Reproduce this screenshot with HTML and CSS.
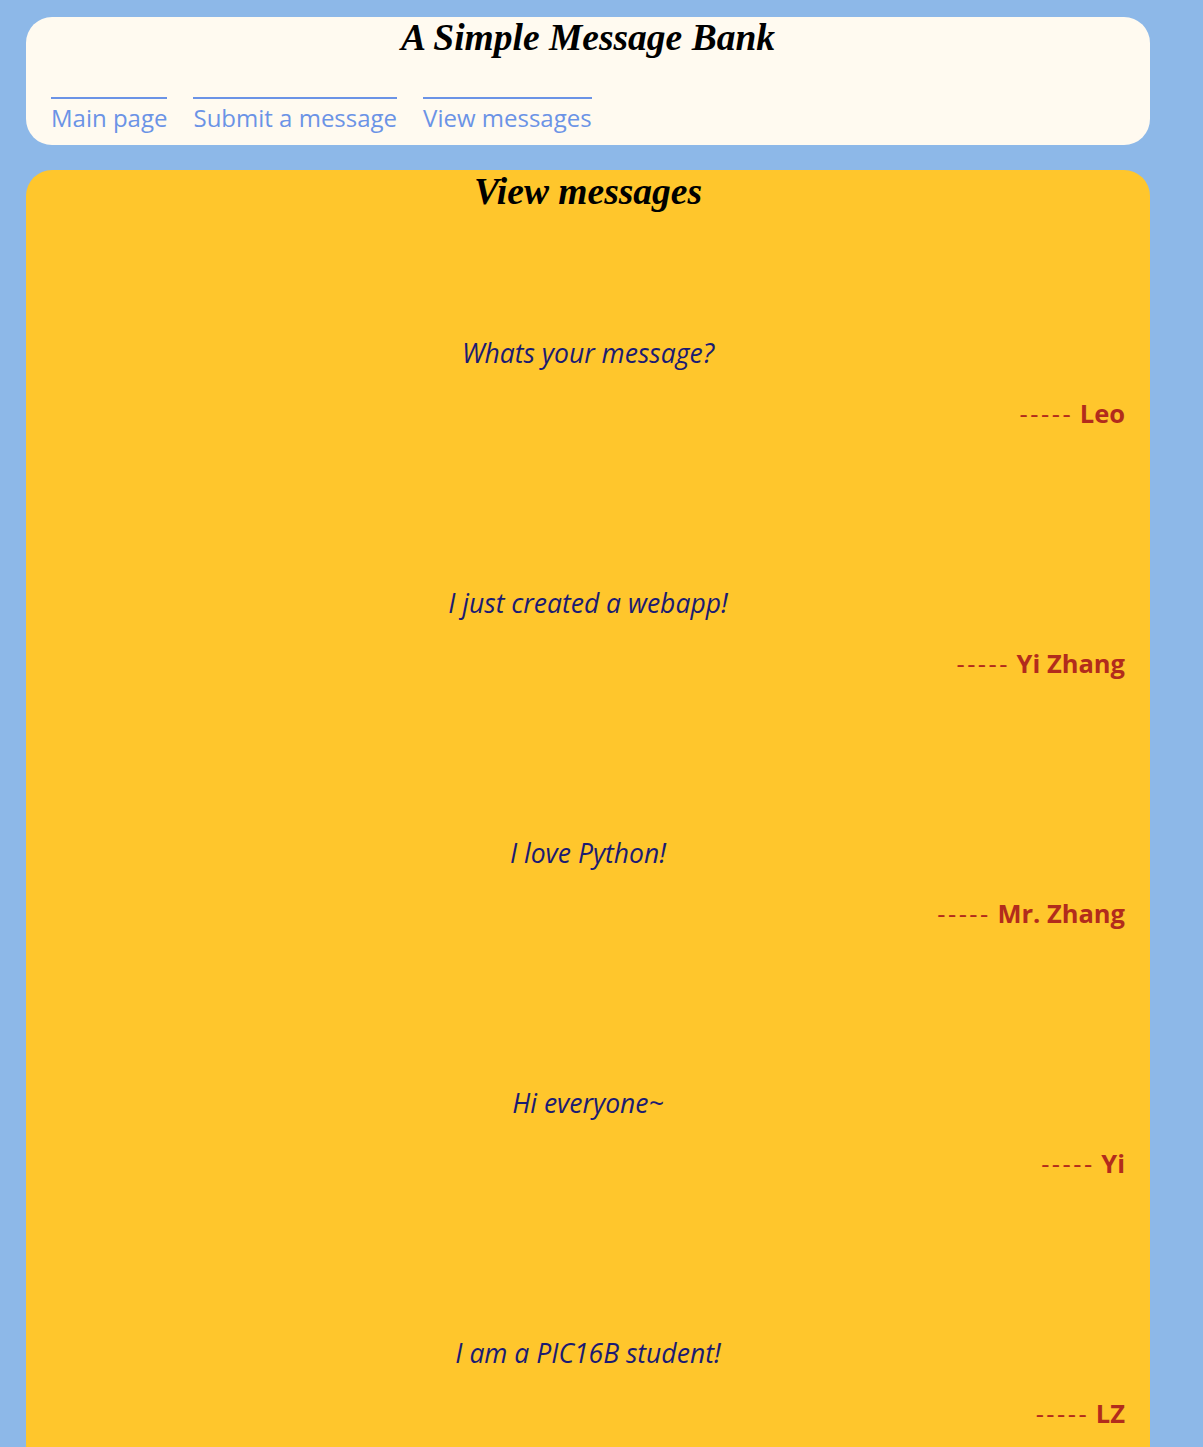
FILE: index.html
```html
<!DOCTYPE html>
<html>
<head>
<meta charset="utf-8">
<title>A Simple Message Bank</title>
<link rel="stylesheet" href="styles.css">
</head>
<body>
<div class="page">
  <header class="top">
    <h1 class="site-title">A Simple Message Bank</h1>
    <nav class="nav">
      <a class="nav-link" href="#">Main page</a>
      <a class="nav-link" href="#">Submit a message</a>
      <a class="nav-link" href="#">View messages</a>
    </nav>
  </header>
  <main class="content">
    <h2 class="page-title">View messages</h2>
    <div class="messages">
      <div class="msg">
        <p class="msg-text">Whats your message?</p>
        <p class="msg-name"><span class="dash">-----</span> <b>Leo</b></p>
      </div>
      <div class="msg">
        <p class="msg-text">I just created a webapp!</p>
        <p class="msg-name"><span class="dash">-----</span> <b>Yi Zhang</b></p>
      </div>
      <div class="msg">
        <p class="msg-text">I love Python!</p>
        <p class="msg-name"><span class="dash">-----</span> <b>Mr. Zhang</b></p>
      </div>
      <div class="msg">
        <p class="msg-text">Hi everyone~</p>
        <p class="msg-name"><span class="dash">-----</span> <b>Yi</b></p>
      </div>
      <div class="msg">
        <p class="msg-text">I am a PIC16B student!</p>
        <p class="msg-name"><span class="dash">-----</span> <b>LZ</b></p>
      </div>
    </div>
  </main>
</div>
</body>
</html>
```

FILE: styles.css
```css
html, body {
  margin: 0;
  padding: 0;
  background: #8db8e8;
}
body {
  font-family: "Comic Sans MS", "Open Sans", sans-serif;
}
.page {
  width: 1124px;
  margin-left: 26px;
  padding-top: 17px;
  display: flex;
  flex-direction: column;
  gap: 25px;
}
.top {
  background: #fffaf0;
  border-radius: 26px;
  height: 128px;
  box-sizing: border-box;
  padding: 0 25px;
}
.site-title {
  margin: 0;
  font-family: "Liberation Serif", serif;
  font-style: italic;
  font-weight: bold;
  font-size: 37.5px;
  line-height: 42px;
  text-align: center;
  color: #000;
}
.nav {
  margin-top: 38px;
  display: flex;
  gap: 26px;
}
.nav-link {
  color: #6b93e6;
  text-decoration: none;
  font-size: 24px;
  line-height: 34px;
  padding-top: 2px;
  border-top: 2px solid #6b93e6;
}
.content {
  background: #ffc62c;
  border-radius: 26px 26px 0 0;
  padding: 0 25px 40px;
  min-height: 1300px;
}
.page-title {
  margin: 0;
  font-family: "Liberation Serif", serif;
  font-style: italic;
  font-weight: bold;
  font-size: 37.5px;
  line-height: 44px;
  text-align: center;
  color: #000;
}
.messages {
  padding-top: 124px;
  display: flex;
  flex-direction: column;
  gap: 160px;
}
.msg {
  display: flex;
  flex-direction: column;
  gap: 30px;
}
.msg-text {
  margin: 0;
  font-style: italic;
  font-size: 26.5px;
  line-height: 30px;
  text-align: center;
  color: #1b1b72;
}
.msg-name {
  margin: 0;
  font-size: 25.5px;
  line-height: 30px;
  text-align: right;
  color: #b22c1c;
}
.dash {
  letter-spacing: 2.5px;
}
.msg-name b {
  font-weight: bold;
}
```
